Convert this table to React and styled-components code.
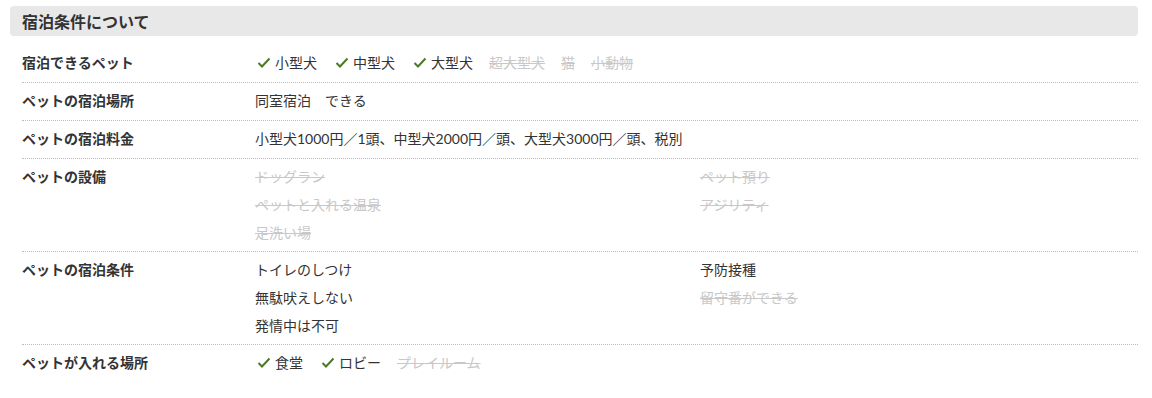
import React from 'react';
import styled, { createGlobalStyle } from 'styled-components';

const GlobalStyle = createGlobalStyle`
  body {
    margin: 0;
    background: #fff;
    font-family: Lato, "Noto Sans CJK JP", sans-serif;
    color: #333;
  }
`;

const Section = styled.section`
  padding: 6px 14px 0 10px;
`;

const Heading = styled.h2`
  margin: 0;
  height: 30px;
  display: flex;
  align-items: center;
  padding: 0 12px;
  background: #e8e8e8;
  border-radius: 4px;
  font-size: 16px;
  font-weight: bold;
  color: #333;
`;

const Table = styled.dl`
  margin: 9px 0 0 12px;
`;

const Row = styled.div`
  display: grid;
  grid-template-columns: 233px 1fr;
  padding: 4px 0;
  border-bottom: 1px dotted #bbb;
  &:last-child {
    border-bottom: none;
  }
`;

const Label = styled.dt`
  font-size: 14px;
  font-weight: bold;
  line-height: 28px;
`;

const Value = styled.dd`
  margin: 0;
  min-height: 29px;
  font-size: 14px;
  line-height: 28px;
  display: ${p => (p.$cols ? 'grid' : 'flex')};
  align-items: flex-start;
  grid-template-columns: 445px 1fr;
  grid-auto-flow: column;
  grid-template-rows: ${p => (p.$rows ? `repeat(${p.$rows}, 28px)` : 'none')};
  gap: ${p => (p.$cols ? '0' : '0 16px')};
`;

const Item = styled.span`
  display: inline-flex;
  align-items: center;
  color: ${p => (p.$off ? '#c8c8c8' : '#333')};
  text-decoration: ${p => (p.$off ? 'line-through' : 'none')};
`;

const Check = styled.svg`
  width: 14px;
  height: 12px;
  margin: 0 4px 0 2px;
`;

const CheckMark = () => (
  <Check viewBox="0 0 14 12">
    <polyline points="1.5,6 5,9.5 12.5,1.5" fill="none" stroke="#4b7a26" strokeWidth="2" />
  </Check>
);

const Checked = ({ items }) => items.map(([text, on]) => (
  <Item key={text} $off={!on}>
    {on ? <CheckMark /> : null}
    {text}
  </Item>
));

const Plain = ({ items }) => items.map(([text, on]) => (
  <Item key={text} $off={!on}>{text}</Item>
));

const App = () => (
  <>
    <GlobalStyle />
    <Section>
      <Heading>宿泊条件について</Heading>
      <Table>
        <Row>
          <Label>宿泊できるペット</Label>
          <Value>
            <Checked items={[['小型犬', true], ['中型犬', true], ['大型犬', true], ['超大型犬', false], ['猫', false], ['小動物', false]]} />
          </Value>
        </Row>
        <Row>
          <Label>ペットの宿泊場所</Label>
          <Value>同室宿泊　できる</Value>
        </Row>
        <Row>
          <Label>ペットの宿泊料金</Label>
          <Value>小型犬1000円／1頭、中型犬2000円／頭、大型犬3000円／頭、税別</Value>
        </Row>
        <Row>
          <Label>ペットの設備</Label>
          <Value $cols $rows={3}>
            <Plain items={[['ドッグラン', false], ['ペットと入れる温泉', false], ['足洗い場', false], ['ペット預り', false], ['アジリティ', false]]} />
          </Value>
        </Row>
        <Row>
          <Label>ペットの宿泊条件</Label>
          <Value $cols $rows={3}>
            <Plain items={[['トイレのしつけ', true], ['無駄吠えしない', true], ['発情中は不可', true], ['予防接種', true], ['留守番ができる', false]]} />
          </Value>
        </Row>
        <Row>
          <Label>ペットが入れる場所</Label>
          <Value>
            <Checked items={[['食堂', true], ['ロビー', true], ['プレイルーム', false]]} />
          </Value>
        </Row>
      </Table>
    </Section>
  </>
);

export default App;
